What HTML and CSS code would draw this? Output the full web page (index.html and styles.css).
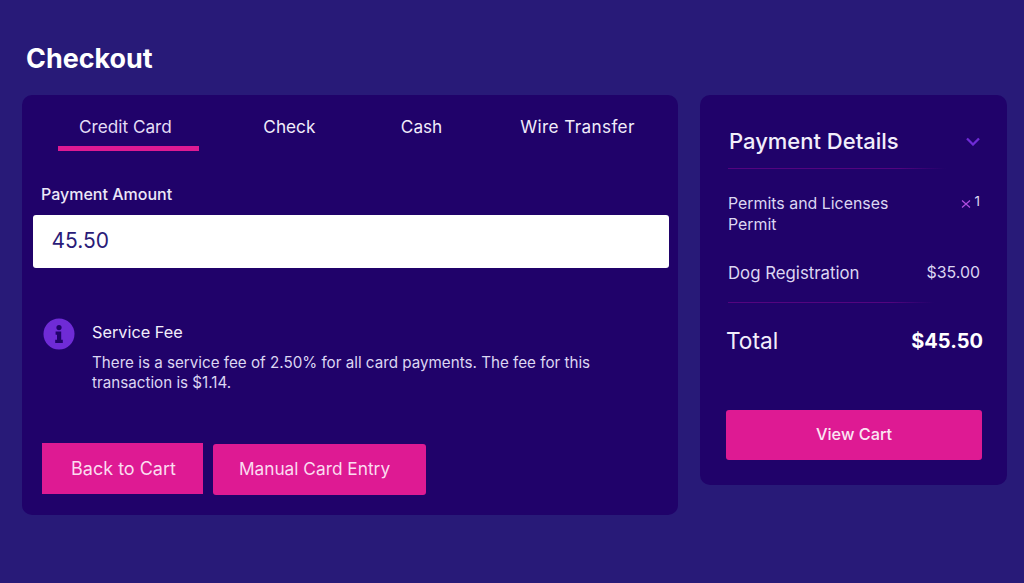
FILE: index.html
```html
<!DOCTYPE html>
<html lang="en">
<head>
<meta charset="utf-8">
<title>Checkout</title>
<link rel="stylesheet" href="styles.css">
</head>
<body>
<main class="page">
  <h1 class="title">Checkout</h1>
  <div class="columns">
    <section class="card pay">
      <nav class="tabs">
        <a class="tab active">Credit Card</a>
        <a class="tab">Check</a>
        <a class="tab">Cash</a>
        <a class="tab wire">Wire Transfer</a>
      </nav>
      <label class="label" for="amount">Payment Amount</label>
      <input class="amount" id="amount" value="45.50">
      <div class="notice">
        <svg class="info" viewBox="0 0 32 32" aria-hidden="true">
          <circle cx="16" cy="16" r="15.5" fill="#6f2bd6"/>
          <circle cx="16" cy="9.6" r="2.6" fill="#20026a"/>
          <path d="M12.6 13.6h5.6v8.2h1.6v3.2h-7.6v-3.2h1.8v-5h-1.4z" fill="#20026a"/>
        </svg>
        <div class="notice-text">
          <h2 class="notice-title">Service Fee</h2>
          <p class="notice-body">There is a service fee of 2.50% for all card payments. The fee for this transaction is $1.14.</p>
        </div>
      </div>
      <div class="actions">
        <button class="btn square">Back to Cart</button>
        <button class="btn rounded">Manual Card Entry</button>
      </div>
    </section>
    <aside class="card details">
      <header class="details-head">
        <h2 class="details-title">Payment Details</h2>
        <svg class="chevron" viewBox="0 0 14 9" aria-hidden="true"><path d="M1 1.5l6 6 6-6" fill="none" stroke="#6f2bd6" stroke-width="2.3"/></svg>
      </header>
      <div class="rule"></div>
      <div class="row first">
        <span class="name">Permits and Licenses<br>Permit</span>
        <span class="qty"><svg class="times" viewBox="0 0 10 10" aria-hidden="true"><path d="M1 1.5l8 7M9 1.5l-8 7" fill="none" stroke="#b04ee0" stroke-width="1.2"/></svg>1</span>
      </div>
      <div class="row second">
        <span class="name dog">Dog Registration</span>
        <span class="price">$35.00</span>
      </div>
      <div class="rule lower"></div>
      <div class="total">
        <span class="total-label">Total</span>
        <span class="total-value">$45.50</span>
      </div>
      <button class="btn view">View Cart</button>
    </aside>
  </div>
</main>
</body>
</html>
```

FILE: styles.css
```css
* { box-sizing: border-box; }
html, body { margin: 0; height: 100%; }
body {
  background: #281a78;
  font-family: Inter, "Liberation Sans", sans-serif;
  color: #ece8f8;
  overflow: hidden;
}
.page { padding: 42px 17px 0 22px; }
.title {
  margin: 0 0 21px 4px;
  font-size: 26.9px;
  line-height: 32px;
  font-weight: 700;
  color: #fff;
}
.columns { display: flex; align-items: flex-start; gap: 22px; }
.card { background: #20026a; border-radius: 10px; }
.pay { width: 656px; height: 420px; padding: 14px 9px 0 11px; }
.tabs { display: flex; gap: 43.5px; padding-left: 25px; }
.tab {
  padding: 6px 21px 8px;
  font-size: 17.2px;
  line-height: 23px;
  border-bottom: 5px solid transparent;
  white-space: nowrap;
}
.tab:not(.active) { color: #f0ecfa; }
.tab.active { padding-right: 27px; border-bottom-color: #de1a93; color: #e4def6; }
.tab.wire { margin-left: -7.5px; letter-spacing: 0.35px; }
.label {
  display: block;
  margin: 33px 0 11px 8px;
  font-size: 16px;
  line-height: 20px;
  font-weight: 500;
}
.amount {
  display: block;
  width: 636px;
  height: 53px;
  padding: 0 18.5px 2px;
  border: 0;
  border-radius: 3px;
  background: #fff;
  font: 400 21px Inter, sans-serif;
  color: #2a1b78;
}
.notice { display: flex; gap: 17px; margin: 50px 0 0 10px; }
.info { width: 32px; height: 32px; flex: none; }
.notice-text { padding-top: 3px; }
.notice-title {
  margin: 0 0 10px;
  font-size: 16.3px;
  line-height: 22px;
  font-weight: 400;
  color: #f2eefb;
}
.notice-body {
  margin: 0;
  width: 530px;
  font-size: 15.2px;
  line-height: 20px;
  color: #dcd6f2;
}
.actions { display: flex; align-items: flex-start; gap: 10px; margin: 50px 0 0 9px; }
.btn {
  border: 0;
  background: #de1a93;
  color: #fbdcf0;
  font-family: Inter, sans-serif;
  font-size: 18px;
  font-weight: 400;
}
.square { width: 161px; height: 51px; padding: 0 0 1px 2px; }
.rounded { width: 213px; height: 51px; margin-top: 1px; padding: 0 10px 2px 0; border-radius: 3px; font-size: 17.3px; }
.details { width: 307px; height: 390px; padding: 30px 25px 0 26px; }
.details-head { display: flex; justify-content: space-between; align-items: center; padding: 0 2px 0 3px; }
.details-title {
  margin: 0;
  font-size: 22px;
  line-height: 32px;
  font-weight: 500;
  color: #f2eefb;
}
.chevron { width: 14px; height: 9px; }
.rule {
  height: 1px;
  margin: 11px 36px 0 2px;
  background: linear-gradient(to right, #54047f 78%, #20026a);
}
.rule.lower { margin: 18px 48px 0 2px; }
.row {
  display: flex;
  justify-content: space-between;
  align-items: flex-start;
  padding: 0 2px 0 2px;
  font-size: 15.9px;
  line-height: 21px;
  color: #dcd6f2;
}
.row.first { margin-top: 24px; }
.row.second { margin-top: 28px; }
.dog { font-size: 16.8px; }
.qty { display: flex; align-items: flex-start; gap: 4px; font-size: 13.5px; line-height: 15px; margin-top: 1px; }
.times { width: 10px; height: 10px; margin-top: 5px; }
.price { line-height: 19px; }
.total {
  display: flex;
  justify-content: space-between;
  align-items: center;
  margin: 23px -1px 0 0;
  line-height: 30px;
}
.total-label { font-size: 22.7px; font-weight: 400; color: #f2eefb; }
.total-value { font-size: 20px; font-weight: 700; color: #fff; }
.view {
  display: block;
  width: 256px;
  height: 50px;
  margin-top: 54px;
  padding-bottom: 4px;
  border-radius: 3px;
  font-size: 16.3px;
  font-weight: 500;
  color: #fbe6f3;
}
```
